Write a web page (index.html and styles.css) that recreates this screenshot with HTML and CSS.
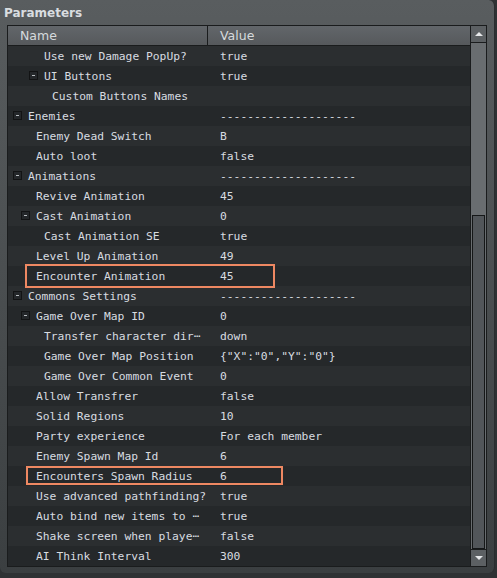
FILE: index.html
```html
<!DOCTYPE html>
<html>
<head>
<meta charset="utf-8">
<link rel="stylesheet" href="styles.css">
</head>
<body>
<div class="window">
  <div class="title">Parameters</div>
  <div class="table">
    <div class="grid">
      <div class="head">
        <div class="hname">Name</div>
        <div class="hvalue">Value</div>
      </div>
      <div class="row"><div class="name l2">Use new Damage PopUp?</div><div class="value">true</div></div>
      <div class="row"><div class="name l2"><span class="tog"></span>UI Buttons</div><div class="value">true</div></div>
      <div class="row"><div class="name l3">Custom Buttons Names</div><div class="value"></div></div>
      <div class="row"><div class="name l0"><span class="tog"></span>Enemies</div><div class="value">--------------------</div></div>
      <div class="row"><div class="name l1">Enemy Dead Switch</div><div class="value">B</div></div>
      <div class="row"><div class="name l1">Auto loot</div><div class="value">false</div></div>
      <div class="row"><div class="name l0"><span class="tog"></span>Animations</div><div class="value">--------------------</div></div>
      <div class="row"><div class="name l1">Revive Animation</div><div class="value">45</div></div>
      <div class="row"><div class="name l1"><span class="tog"></span>Cast Animation</div><div class="value">0</div></div>
      <div class="row"><div class="name l2">Cast Animation SE</div><div class="value">true</div></div>
      <div class="row"><div class="name l1">Level Up Animation</div><div class="value">49</div></div>
      <div class="row"><div class="name l1">Encounter Animation</div><div class="value">45</div></div>
      <div class="row"><div class="name l0"><span class="tog"></span>Commons Settings</div><div class="value">--------------------</div></div>
      <div class="row"><div class="name l1"><span class="tog"></span>Game Over Map ID</div><div class="value">0</div></div>
      <div class="row"><div class="name l2">Transfer character dir⋯</div><div class="value">down</div></div>
      <div class="row"><div class="name l2">Game Over Map Position</div><div class="value">{"X":"0","Y":"0"}</div></div>
      <div class="row"><div class="name l2">Game Over Common Event</div><div class="value">0</div></div>
      <div class="row"><div class="name l1">Allow Transfrer</div><div class="value">false</div></div>
      <div class="row"><div class="name l1">Solid Regions</div><div class="value">10</div></div>
      <div class="row"><div class="name l1">Party experience</div><div class="value">For each member</div></div>
      <div class="row"><div class="name l1">Enemy Spawn Map Id</div><div class="value">6</div></div>
      <div class="row"><div class="name l1">Encounters Spawn Radius</div><div class="value">6</div></div>
      <div class="row"><div class="name l1">Use advanced pathfinding?</div><div class="value">true</div></div>
      <div class="row"><div class="name l1">Auto bind new items to ⋯</div><div class="value">true</div></div>
      <div class="row"><div class="name l1">Shake screen when playe⋯</div><div class="value">false</div></div>
      <div class="row"><div class="name l1">AI Think Interval</div><div class="value">300</div></div>
    </div>
    <div class="scroll">
      <div class="sbtn up"><span class="tri-up"></span></div>
      <div class="track"><div class="thumb"></div></div>
      <div class="sbtn down"><span class="tri-down"></span></div>
    </div>
  </div>
</div>
<div class="mark mark1"></div>
<div class="mark mark2"></div>
</body>
</html>
```
FILE: styles.css
```css
html, body {
  margin: 0;
  padding: 0;
}
body {
  width: 497px;
  height: 578px;
  background: #2f3234;
  position: relative;
  overflow: hidden;
}
.window {
  box-sizing: border-box;
  width: 495px;
  height: 573px;
  border-right: 1px solid #2a2d2f;
  border-radius: 0 6px 6px 6px;
  background: linear-gradient(#595d5f, #3b3f41);
  display: flex;
  flex-direction: column;
}
.title {
  height: 25px;
  line-height: 26px;
  padding-left: 4px;
  font-family: "DejaVu Sans", sans-serif;
  font-weight: bold;
  font-size: 12px;
  color: #d9dde0;
}
.table {
  margin-left: 7px;
  width: 480px;
  box-sizing: border-box;
  border: 1px solid #1a1c1d;
  display: flex;
  height: 542px;
}
.grid {
  width: 462px;
  display: flex;
  flex-direction: column;
  overflow: hidden;
  background: #25282a;
}
.head {
  height: 19px;
  flex: none;
  border-bottom: 1px solid #1a1c1d;
  background: linear-gradient(#62666a, #56595c);
  display: flex;
  font-family: "DejaVu Sans", sans-serif;
  font-size: 12.5px;
  line-height: 19px;
  color: #d6dadd;
}
.hname {
  width: 187px;
  padding-left: 12px;
  border-right: 1px solid #1a1c1d;
}
.hvalue {
  padding-left: 12px;
}
.row {
  height: 20px;
  flex: none;
  display: flex;
  align-items: center;
  font-family: "DejaVu Sans Mono", monospace;
  font-size: 11.3px;
  color: #d8dce0;
  white-space: nowrap;
}
.row:nth-child(even) {
  background: #2b2e30;
}
.row:nth-child(odd) {
  background: #25282a;
}
.name {
  box-sizing: border-box;
  width: 200px;
  overflow: hidden;
  display: flex;
  align-items: center;
}
.l0 { padding-left: 20px; }
.l1 { padding-left: 28px; }
.l2 { padding-left: 36px; }
.l3 { padding-left: 44px; }
.value {
  padding-left: 12px;
}
.tog {
  box-sizing: border-box;
  width: 9px;
  height: 9px;
  margin-left: -15px;
  margin-right: 6px;
  margin-top: -2px;
  border: 1px solid #121314;
  background: #24272a;
  position: relative;
  flex: none;
}
.tog::after {
  content: "";
  position: absolute;
  left: 2px;
  top: 3px;
  width: 3px;
  height: 1px;
  background: #b8bcc0;
}
.scroll {
  width: 15px;
  border-left: 1px solid #1a1c1d;
  display: flex;
  flex-direction: column;
  background: #55595c;
}
.sbtn {
  height: 16px;
  flex: none;
  background: #5c6063;
  display: flex;
  align-items: center;
  justify-content: center;
}
.up {
  border-bottom: 1px solid #1a1c1d;
}
.down {
  border-top: 1px solid #1a1c1d;
}
.tri-up {
  width: 0;
  height: 0;
  border-left: 4px solid transparent;
  border-right: 4px solid transparent;
  border-bottom: 4px solid #e6e8ea;
}
.tri-down {
  width: 0;
  height: 0;
  border-left: 4px solid transparent;
  border-right: 4px solid transparent;
  border-top: 4px solid #e6e8ea;
}
.track {
  flex: 1;
  background: #696d70;
  display: flex;
  flex-direction: column;
}
.thumb {
  box-sizing: border-box;
  margin: 172px 1px 0 1px;
  flex: 1;
  background: #52565a;
  border: 1px solid #151718;
}
.mark {
  position: absolute;
  box-sizing: border-box;
  border: 2px solid #ee8862;
}
.mark1 {
  left: 25px;
  top: 264px;
  width: 250px;
  height: 24px;
}
.mark2 {
  left: 26px;
  top: 466px;
  width: 257px;
  height: 19px;
}
```
